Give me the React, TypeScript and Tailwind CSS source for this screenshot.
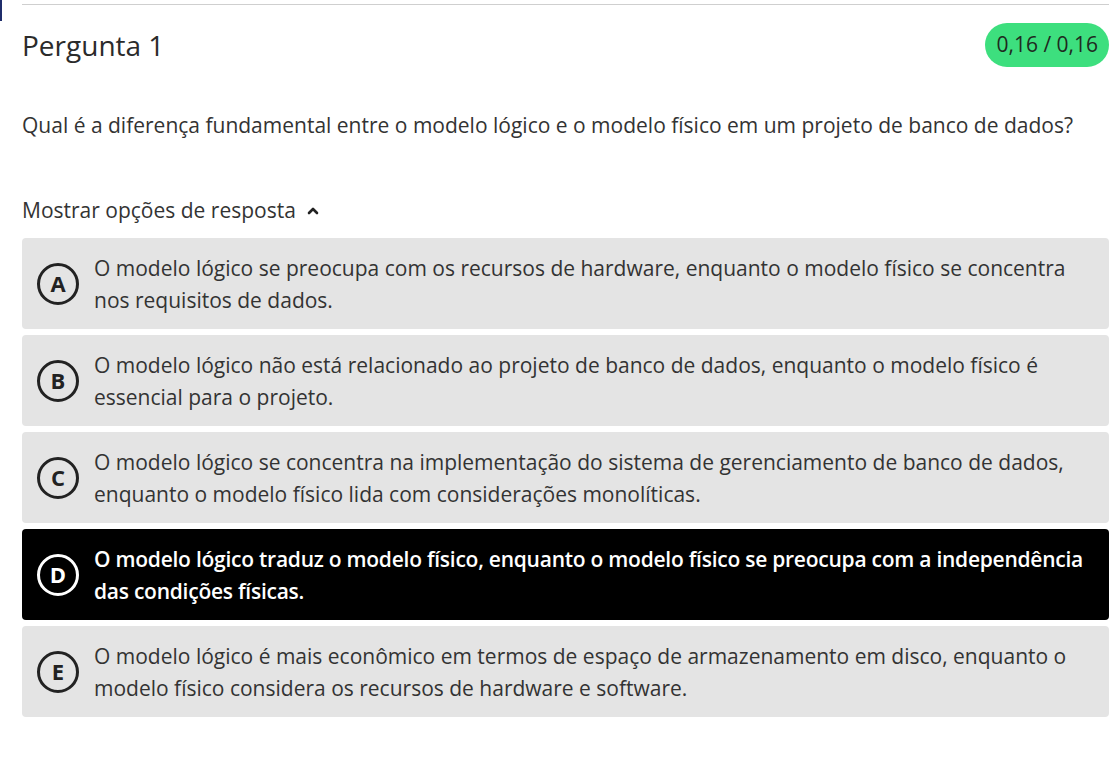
import React from "react";

const options = [
  { l: "A", t: "O modelo lógico se preocupa com os recursos de hardware, enquanto o modelo físico se concentra nos requisitos de dados." },
  { l: "B", t: "O modelo lógico não está relacionado ao projeto de banco de dados, enquanto o modelo físico é essencial para o projeto." },
  { l: "C", t: "O modelo lógico se concentra na implementação do sistema de gerenciamento de banco de dados, enquanto o modelo físico lida com considerações monolíticas." },
  { l: "D", t: "O modelo lógico traduz o modelo físico, enquanto o modelo físico se preocupa com a independência das condições físicas.", sel: true },
  { l: "E", t: "O modelo lógico é mais econômico em termos de espaço de armazenamento em disco, enquanto o modelo físico considera os recursos de hardware e software." },
];

export default function App() {
  return (
    <div className="relative w-[1117px] h-[757px] bg-white font-['Open_Sans',sans-serif] text-[#333]">
      <div className="absolute left-0 top-0 w-[2px] h-[21px] bg-[#1f2d6b]" />
      <div className="pl-[22px] pr-[8px] pt-[4px]">
        <div className="h-px bg-[#cfcfcf]" />
        <div className="flex items-center justify-between mt-[18px]">
          <h2 className="text-[28px] leading-[44px] text-[#2b2b2b]">Pergunta 1</h2>
          <div className="h-[44px] px-[11px] rounded-full bg-[#3ddf7e] flex items-center text-[21px] text-[#1f2a1f]">
            0,16 / 0,16
          </div>
        </div>
        <p className="mt-[42px] text-[21px] leading-[32px]">
          Qual é a diferença fundamental entre o modelo lógico e o modelo físico em um projeto de banco de dados?
        </p>
        <div className="mt-[53px] flex items-center gap-[11px] text-[21px] leading-[32px]">
          <span>Mostrar opções de resposta</span>
          <svg width="12" height="10" viewBox="0 0 12 10" className="mt-[2px]">
            <path d="M2 7 L6 3 L10 7" fill="none" stroke="#222" strokeWidth="2.6" strokeLinecap="round" strokeLinejoin="round" />
          </svg>
        </div>
        <div className="mt-[12px] flex flex-col gap-[6px]">
          {options.map((o) => (
            <div
              key={o.l}
              className={
                o.sel
                  ? "flex items-center rounded-[4px] bg-black text-white font-semibold tracking-[-0.25px] min-h-[91px] pl-[15px] pr-[4px] py-[13px]"
                  : "flex items-center rounded-[4px] bg-[#e4e4e4] text-[#333] min-h-[91px] pl-[15px] pr-[10px] py-[13px]"
              }
            >
              <div
                className={
                  o.sel
                    ? "w-[42px] h-[42px] shrink-0 rounded-full border-[3px] border-white flex items-center justify-center text-[22px] font-bold tracking-normal"
                    : "w-[42px] h-[42px] shrink-0 rounded-full border-[3px] border-[#222] flex items-center justify-center text-[22px] font-bold text-[#222]"
                }
              >
                {o.l}
              </div>
              <div className="ml-[15px] text-[21px] leading-[32px]">{o.t}</div>
            </div>
          ))}
        </div>
      </div>
    </div>
  );
}
